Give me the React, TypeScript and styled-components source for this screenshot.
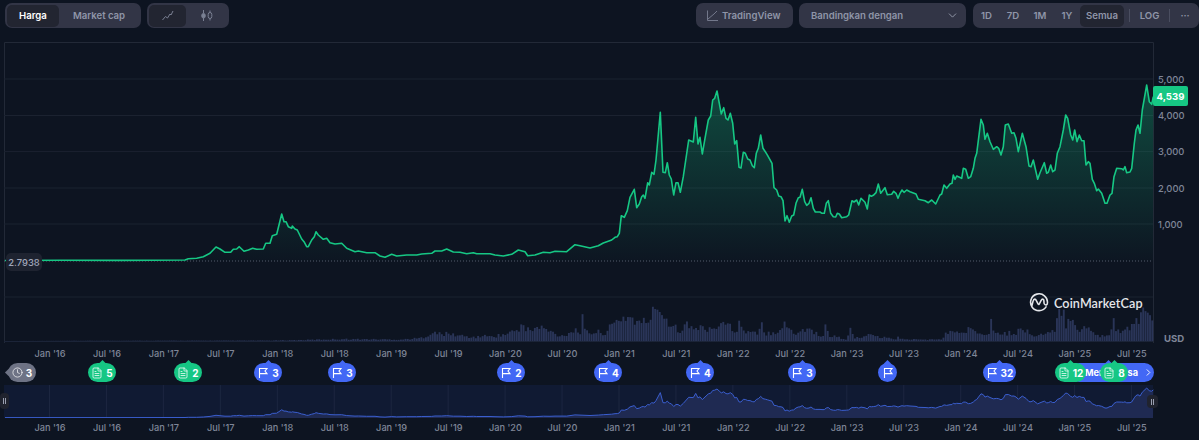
import React from 'react'
import styled, { createGlobalStyle } from 'styled-components'
import { ChevronDown, ChevronRight, Clock, FileText } from 'lucide-react'

const GREEN = '#16c784'
const BLUE = '#4368f5'
const MUTED = '#7f8698'
const BTN = '#323546'
const BTN_ACTIVE = '#222531'

type Pt = [number, number]

// traced from 3x crops, so every block has its own origin
const trace = (ox: number, oy: number, pts: number[][]): Pt[] =>
  pts.map(([x, y]) => [ox + x / 3, oy + y / 3] as Pt)

const PRICE: Pt[] = [
  [5, 260.5],
  [60, 260.2],
  [120, 260.4],
  ...trace(0, 190, [
    [555, 210], [565, 206], [590, 205], [610, 200], [630, 190], [648, 171], [660, 177], [675, 187], [692, 187],
    [700, 178], [710, 177], [718, 170], [732, 184], [745, 180], [758, 175], [770, 178], [790, 177], [797, 160],
    [810, 160], [817, 137], [830, 133], [845, 72], [852, 95], [858, 95], [865, 110], [875, 115], [877, 108],
    [885, 117], [892, 120], [905, 147], [912, 155], [920, 170], [925, 170], [935, 150], [943, 140], [948, 125],
    [955, 135],
  ]),
  ...trace(300, 200, [
    [70, 118], [80, 115], [90, 128], [105, 132], [125, 130], [140, 145], [165, 155], [175, 153], [200, 158],
    [225, 158], [240, 168], [255, 172], [275, 163], [290, 168], [320, 165], [350, 165], [365, 162], [395, 160],
    [405, 153], [425, 153], [440, 147], [460, 156], [480, 157], [500, 161], [520, 158], [530, 161], [570, 161],
    [585, 165], [610, 168], [635, 163], [655, 150], [675, 155], [683, 167], [705, 165], [730, 157], [750, 158],
    [765, 154], [800, 155], [825, 134],
  ]),
  ...trace(580, 80, [
    [0, 497], [30, 504], [55, 497], [70, 489], [95, 480], [105, 472], [112, 470], [118, 460], [124, 407], [133, 412],
    [142, 392], [150, 352], [163, 328], [170, 383], [178, 372], [185, 350], [190, 345], [195, 355], [203, 308],
    [208, 315], [215, 277], [222, 283], [228, 240], [241, 97], [249, 277], [256, 278], [262, 248], [268, 285],
    [274, 297], [281, 345], [288, 308], [294, 308], [301, 337], [310, 290], [326, 180], [340, 186], [347, 112],
    [354, 192], [360, 172], [367, 222], [375, 175], [385, 120], [392, 108], [398, 60], [404, 55], [411, 33],
    [418, 70], [424, 102], [431, 83], [438, 115], [444, 120], [451, 100], [458, 130], [464, 192], [470, 182],
    [477, 262], [483, 264], [490, 217], [496, 220], [503, 237], [510, 240], [517, 257], [523, 263], [529, 220],
    [535, 205], [542, 165], [549, 205], [556, 215], [563, 227], [576, 250], [582, 323], [590, 330], [596, 348],
    [603, 350], [609, 362], [615, 423], [621, 407], [628, 427], [635, 408], [641, 405], [648, 370], [655, 353],
    [660, 352], [667, 328], [674, 365], [680, 376], [687, 370], [693, 353], [700, 385], [706, 396], [720, 396],
    [726, 400], [733, 400], [739, 370], [745, 362], [752, 400], [760, 410], [767, 411], [772, 400], [778, 402],
    [785, 413], [800, 410], [806, 405], [816, 362], [822, 366], [830, 360], [836, 375], [843, 355], [855, 367],
    [862, 387], [868, 345], [874, 349], [880, 346], [888, 338], [895, 312], [902, 340], [915, 323], [922, 344],
    [935, 343], [941, 334], [948, 340], [954, 355],
  ]),
  ...trace(900, 80, [
    [0, 340], [6, 330], [12, 337], [20, 330], [30, 335], [48, 342], [55, 358], [75, 362], [85, 368], [95, 360],
    [107, 372], [120, 345], [125, 342], [132, 315], [140, 325], [150, 312], [156, 310], [160, 285], [165, 298],
    [170, 288], [185, 295], [190, 265], [197, 268], [205, 295], [212, 290], [220, 265], [225, 235], [230, 220],
    [243, 118], [250, 135], [255, 178], [262, 160], [270, 185], [280, 208], [290, 200], [296, 205], [303, 225],
    [310, 200], [316, 135], [325, 132], [335, 160], [342, 158], [348, 175], [355, 215], [367, 160], [378, 200],
    [387, 258], [393, 260], [400, 240], [413, 298], [420, 278], [433, 248], [440, 280], [445, 277], [452, 255],
    [458, 275], [465, 270], [472, 220], [480, 200], [490, 150], [497, 105], [503, 115], [512, 165], [518, 180],
    [524, 150], [531, 185], [538, 165], [545, 182], [552, 182], [558, 255], [565, 245], [570, 250], [577, 298],
    [583, 310], [590, 332], [595, 327], [605, 340], [615, 370], [621, 370], [630, 345], [636, 340], [642, 290],
    [650, 265], [665, 266], [670, 270], [675, 260], [680, 278], [690, 276], [695, 265], [703, 190], [708, 150],
    [714, 135], [720, 160], [727, 90], [740, 15], [748, 65], [755, 73], [760, 50],
  ]),
]

// x, bar height in px
const VOLUME: Pt[] = [
  [5, 0], [100, 0.3], [270, 0.5], [300, 1], [340, 2], [400, 1.5], [420, 3], [430, 8], [450, 7], [470, 4], [481, 4],
  [483, 10], [486, 4], [505, 7], [517, 12], [520, 18], [524, 11], [540, 14], [560, 5], [575, 12], [579, 8], [581, 24],
  [584, 9], [605, 9], [620, 25], [630, 25], [640, 17], [650, 25], [658, 40], [661, 30], [670, 18], [680, 12], [684, 14],
  [686, 27], [689, 12], [700, 14], [720, 14], [723, 32], [726, 15], [736, 12], [739, 22], [742, 10], [758, 7], [760, 19],
  [763, 8], [775, 10], [783, 17], [795, 8], [800, 12], [810, 12], [820, 5], [823, 6], [825, 17], [828, 6], [845, 2],
  [850, 12], [853, 3], [865, 4], [867, 12], [870, 5], [895, 2], [896, 8], [899, 2], [920, 1.5], [940, 1.5], [945, 8],
  [965, 10], [974, 14], [980, 9], [988, 9], [991, 24], [994, 8], [1010, 8], [1025, 13], [1030, 5], [1050, 8], [1054, 10],
  [1056, 22], [1061, 31], [1065, 20], [1072, 26], [1078, 12], [1090, 13], [1095, 5], [1110, 8], [1113, 25], [1116, 10],
  [1130, 12], [1135, 20], [1142, 38], [1148, 22], [1152, 28],
]

const volumeAt = (x: number) => {
  const i = VOLUME.findIndex(([vx]) => vx >= x)
  if (i <= 0) return 0
  const [x0, h0] = VOLUME[i - 1]
  const [x1, h1] = VOLUME[i]
  return h0 + ((h1 - h0) * (x - x0)) / (x1 - x0)
}

const BARS = Array.from({ length: 507 }, (_, i) => {
  const x = 5 + i * 2.27
  const noise = Math.abs(Math.sin(i * 12.9898) * 43758.5453) % 1
  return { x, h: volumeAt(x) * (0.62 + noise * 0.66) }
})

const toPath = (pts: Pt[]) => pts.map(([x, y], i) => `${i ? 'L' : 'M'}${x.toFixed(1)} ${y.toFixed(1)}`).join('')
const LINE = toPath(PRICE)
const NAV_PTS = PRICE.map(([x, y]) => [x, 417.6 + (y - 260.4) * 0.169] as Pt)
const NAV_LINE = toPath(NAV_PTS)

const MONTHS = [
  "Jan '16", "Jul '16", "Jan '17", "Jul '17", "Jan '18", "Jul '18", "Jan '19", "Jul '19", "Jan '20", "Jul '20",
  "Jan '21", "Jul '21", "Jan '22", "Jul '22", "Jan '23", "Jul '23", "Jan '24", "Jul '24", "Jan '25", "Jul '25",
]

const GlobalStyle = createGlobalStyle`
  html, body {
    margin: 0;
    background: #0d1421;
    overflow: hidden;
  }
  body {
    font-family: Inter, "Liberation Sans", sans-serif;
  }
`

const Page = styled.div`
  width: 1199px;
  height: 440px;
  display: flex;
  flex-direction: column;
  background: #0d1421;
`

const Toolbar = styled.div`
  display: flex;
  align-items: center;
  height: 25px;
  margin-top: 3px;
  padding-left: 5px;
`

const Group = styled.div<{ $gap?: number }>`
  display: flex;
  align-items: center;
  height: 25px;
  padding: 0 2px;
  border-radius: 7px;
  background: ${BTN};
  margin-left: ${p => p.$gap ?? 0}px;
`

const ToggleButton = styled.div<{ $w: number; $active?: boolean }>`
  display: flex;
  align-items: center;
  justify-content: center;
  flex: none;
  width: ${p => p.$w}px;
  height: 22px;
  border-radius: 5px;
  background: ${p => (p.$active ? BTN_ACTIVE : 'transparent')};
  color: ${p => (p.$active ? '#fff' : '#8f95a8')};
  font-size: 9.6px;
  font-weight: 600;
`

const Spacer = styled.div`
  flex: 1;
`

const TradingViewButton = styled.div`
  display: flex;
  align-items: center;
  gap: 3px;
  width: 97px;
  height: 25px;
  padding-left: 10px;
  box-sizing: border-box;
  border-radius: 7px;
  background: ${BTN};
  color: #8f95a8;
  font-size: 9.6px;
  font-weight: 600;
`

const CompareSelect = styled.div`
  display: flex;
  align-items: center;
  justify-content: space-between;
  width: 167px;
  height: 25px;
  margin-left: 6px;
  padding: 0 7px 0 12px;
  box-sizing: border-box;
  border-radius: 7px;
  background: ${BTN};
  color: #8f95a8;
  font-size: 9.6px;
  font-weight: 600;
`

const RangeGroup = styled(Group)`
  width: 226px;
  box-sizing: border-box;
  margin-left: 7px;
  padding: 0;
`

const RangeItem = styled.div<{ $w: number; $active?: boolean }>`
  display: flex;
  align-items: center;
  justify-content: center;
  flex: none;
  width: ${p => p.$w}px;
  height: 22px;
  border-radius: 5px;
  background: ${p => (p.$active ? BTN_ACTIVE : 'transparent')};
  color: #8f95a8;
  font-size: 9.6px;
  font-weight: 600;
`

const RangeDivider = styled.div`
  flex: none;
  width: 1px;
  height: 13px;
  background: #4a4e60;
`

const PlotRow = styled.div`
  display: flex;
  height: 301px;
  margin-top: 14px;
  padding-left: 4px;
  position: relative;
`

const Plot = styled.svg`
  display: block;
  flex: none;
  width: 1150px;
  height: 301px;
`

const PriceAxis = styled.div`
  display: flex;
  flex-direction: column;
  padding: 19px 0 0 4px;
  flex: 1;
`

const PriceLabel = styled.div`
  display: flex;
  align-items: center;
  height: 36.3px;
  color: ${MUTED};
  font-size: 9.4px;
  font-weight: 500;
`

const Currency = styled.div`
  margin: auto 0 0 6px;
  color: ${MUTED};
  font-size: 9.6px;
  font-weight: 700;
  position: relative;
  top: 1px;
`

const PriceBadge = styled.div`
  position: absolute;
  left: 1153px;
  top: 44px;
  display: flex;
  align-items: center;
  justify-content: center;
  width: 35px;
  height: 20px;
  border-radius: 2px;
  background: ${GREEN};
  color: #fff;
  font-size: 9.6px;
  font-weight: 700;
`

const StartTag = styled.div`
  position: absolute;
  left: 6px;
  top: 211px;
  display: flex;
  align-items: center;
  justify-content: center;
  width: 36px;
  height: 18px;
  border-radius: 5px;
  background: #1e2330;
  color: #a1a7bb;
  font-size: 9.4px;
  font-weight: 500;
`

const Brand = styled.div`
  position: absolute;
  left: 1029px;
  top: 251px;
  display: flex;
  align-items: center;
  gap: 5px;
  color: #e4e6ea;
  font-size: 12.6px;
  font-weight: 600;
  letter-spacing: 0.1px;
  font-family: Lato, Inter, sans-serif;
`

const TimeAxis = styled.div<{ $h: number }>`
  display: grid;
  grid-template-columns: repeat(20, 56.95px);
  align-items: center;
  height: ${p => p.$h}px;
  padding-left: 21.5px;
`

const TimeLabel = styled.div`
  text-align: center;
  color: ${MUTED};
  font-size: 9.2px;
  font-weight: 500;
  white-space: nowrap;
`

const EventRow = styled.div`
  position: relative;
  height: 19px;
`

const Pin = styled.div<{ $tone: 'grey' | 'green' | 'blue'; $nub?: 'top' | 'left' }>`
  position: absolute;
  top: 0;
  display: flex;
  align-items: center;
  justify-content: center;
  gap: 3px;
  height: 19px;
  box-sizing: border-box;
  border-radius: 10px;
  background: ${p => (p.$tone === 'grey' ? '#6e7385' : p.$tone === 'green' ? GREEN : BLUE)};
  color: #fff;
  font-size: 10px;
  font-weight: 700;

  &::before {
    content: '';
    position: absolute;
    background: inherit;
    width: 5px;
    height: 5px;
    transform: rotate(45deg);
    ${p => (p.$nub === 'left' ? 'left: -2.5px; top: 7px;' : 'left: calc(50% - 2.5px); top: -2px;')}
  }

  > * {
    position: relative;
  }
`

const NewsPill = styled(Pin)`
  justify-content: flex-start;
  gap: 0;
  padding-left: 15px;
  font-size: 9.2px;

  &::before {
    left: 36px;
  }
`

const PillGap = styled.span`
  width: 25px;
`

const PillChevron = styled(ChevronRight)`
  margin-left: 5px;
`

const Navigator = styled.div`
  position: relative;
  height: 33px;
  margin: 3px 0 0 4px;
  width: 1150px;
`

const NavChart = styled.svg`
  display: block;
  width: 1150px;
  height: 33px;
`

const NavHandle = styled.div<{ $side: 'left' | 'right' }>`
  position: absolute;
  top: ${p => (p.$side === 'left' ? 8 : 10)}px;
  ${p => (p.$side === 'left' ? 'left: -4px;' : 'left: 1143px;')}
  display: flex;
  align-items: center;
  justify-content: center;
  gap: 1px;
  width: ${p => (p.$side === 'left' ? 9 : 11)}px;
  height: ${p => (p.$side === 'left' ? 16 : 13)}px;
  border-radius: 4px;
  background: #20232e;

  &::before,
  &::after {
    content: '';
    width: 1px;
    height: 6px;
    background: #9a9fb0;
  }
`

const FlagIcon = () => (
  <svg width="12" height="12" viewBox="0 0 12 12" fill="none" stroke="#fff" strokeWidth="1.1">
    <path d="M2.5 11V1.5h7.5L8 4l2 2.6H2.5" />
  </svg>
)

const LineIcon = () => (
  <svg width="13" height="13" viewBox="0 0 13 13" fill="none" stroke="#7a8093" strokeWidth="1">
    <path d="M1.5 11l3-3.5 2 1.5 2.5-4 1 1 2-4" />
  </svg>
)

const CandleIcon = () => (
  <svg width="14" height="13" viewBox="0 0 14 13" fill="none" stroke="#7a8093" strokeWidth="1">
    <path d="M3.5 1v3M3.5 9v3" />
    <rect x="1.8" y="4.5" width="3.4" height="4.5" rx="1.7" fill="#7a8093" />
    <path d="M10 1.5v2M10 9.5v2" />
    <rect x="8.2" y="3.5" width="3.6" height="6" rx="1.8" />
  </svg>
)

const ChartIcon = () => (
  <svg width="13" height="13" viewBox="0 0 13 13" fill="none" stroke="#7a8093" strokeWidth="0.9">
    <path d="M1.5 1.5v10h10.5M2 10l6-5 3-3" />
  </svg>
)

const CmcLogo = () => (
  <svg width="20" height="20" viewBox="0 0 19 19" fill="none" stroke="#e4e6ea" strokeWidth="1.5" strokeLinecap="round" strokeLinejoin="round">
    <path d="M16.2 13.2A8 8 0 1 1 17.5 9.5c0 1.6-1.3 2.2-2.3 1.6-.9-.5-1-1.4-1-2.4V7.5c0-1-.5-1.7-1.2-1.7-.8 0-1.2.6-1.6 1.4l-1.5 3c-.3.6-.7 1-1.2.3L7 7.2C6.6 6.3 6.2 5.8 5.5 5.8c-.9 0-1.4 1-1.7 2.2l-1 4" />
  </svg>
)

interface IEvent {
  left: number
  tone: 'grey' | 'green' | 'blue'
  width: number
  count?: string
}

const EVENTS: IEvent[] = [
  { left: 88, width: 28, tone: 'green', count: '5' },
  { left: 174, width: 28, tone: 'green', count: '2' },
  { left: 254, width: 28, tone: 'blue', count: '3' },
  { left: 328, width: 28, tone: 'blue', count: '3' },
  { left: 497, width: 28, tone: 'blue', count: '2' },
  { left: 594, width: 28, tone: 'blue', count: '4' },
  { left: 686, width: 28, tone: 'blue', count: '4' },
  { left: 788, width: 28, tone: 'blue', count: '3' },
  { left: 878, width: 19, tone: 'blue' },
  { left: 983, width: 33, tone: 'blue', count: '32' },
  { left: 1055, width: 31, tone: 'green', count: '12' },
  { left: 1100, width: 28, tone: 'green', count: '8' },
]

export default function App() {
  return (
    <Page>
      <GlobalStyle />
      <Toolbar>
        <Group>
          <ToggleButton $w={52} $active>Harga</ToggleButton>
          <ToggleButton $w={80}>Market cap</ToggleButton>
        </Group>
        <Group $gap={6}>
          <ToggleButton $w={37} $active><LineIcon /></ToggleButton>
          <ToggleButton $w={41}><CandleIcon /></ToggleButton>
        </Group>
        <Spacer />
        <TradingViewButton><ChartIcon />TradingView</TradingViewButton>
        <CompareSelect>
          Bandingkan dengan
          <ChevronDown size={13} color="#9ea3b4" strokeWidth={1.6} />
        </CompareSelect>
        <RangeGroup>
          <RangeItem $w={27}>1D</RangeItem>
          <RangeItem $w={26}>7D</RangeItem>
          <RangeItem $w={28}>1M</RangeItem>
          <RangeItem $w={26}>1Y</RangeItem>
          <RangeItem $w={44} $active>Semua</RangeItem>
          <RangeItem $w={5} />
          <RangeDivider />
          <RangeItem $w={39}>LOG</RangeItem>
          <RangeDivider />
          <RangeItem $w={30}>···</RangeItem>
        </RangeGroup>
      </Toolbar>

      <PlotRow>
        <Plot viewBox="4 42 1150 301">
          <defs>
            <linearGradient id="area" gradientUnits="userSpaceOnUse" x1="0" y1="85" x2="0" y2="261">
              <stop offset="0" stopColor={GREEN} stopOpacity="0.31" />
              <stop offset="1" stopColor={GREEN} stopOpacity="0.01" />
            </linearGradient>
          </defs>
          <path d="M4.5 343V42.5H1153.5V343" fill="none" stroke="#222937" />
          {[79, 115.5, 151.6, 188, 224, 297].map(y => (
            <line key={y} x1="4" x2="1153" y1={y} y2={y} stroke="#1b2230" />
          ))}
          <line x1="4" x2="1153" y1="261" y2="261" stroke="#555b6c" strokeDasharray="1 2" />
          <path d={`${LINE}L1153 261L5 261Z`} fill="url(#area)" />
          <path d={LINE} fill="none" stroke={GREEN} strokeWidth="1.6" strokeLinejoin="round" />
          {BARS.map(b => (
            <rect key={b.x} x={b.x} y={341 - b.h} width="1.9" height={b.h} fill="#2a3558" />
          ))}
          <line x1="4" x2="1153" y1="341.5" y2="341.5" stroke="#1b2438" />
        </Plot>
        <PriceAxis>
          {['5,000', '4,000', '3,000', '2,000', '1,000'].map(p => (
            <PriceLabel key={p}>{p}</PriceLabel>
          ))}
          <Currency>USD</Currency>
        </PriceAxis>
        <PriceBadge>4,539</PriceBadge>
        <StartTag>2.7938</StartTag>
        <Brand><CmcLogo />CoinMarketCap</Brand>
      </PlotRow>

      <TimeAxis $h={20}>
        {MONTHS.map(m => <TimeLabel key={m}>{m}</TimeLabel>)}
      </TimeAxis>

      <EventRow>
        <Pin $tone="grey" $nub="left" style={{ left: 8, width: 28 }}>
          <Clock size={11} strokeWidth={1.5} />
          <span>3</span>
        </Pin>
        <NewsPill $tone="blue" style={{ left: 1070, width: 84 }}>
          <span>Mer</span>
          <PillGap />
          <span>sa</span>
          <PillChevron size={11} strokeWidth={2} />
        </NewsPill>
        {EVENTS.map(e => (
          <Pin key={e.left} $tone={e.tone} style={{ left: e.left, width: e.width }}>
            {e.tone === 'green' ? <FileText size={12} strokeWidth={1.5} /> : <FlagIcon />}
            {e.count && <span>{e.count}</span>}
          </Pin>
        ))}
      </EventRow>

      <Navigator>
        <NavChart viewBox="4 385 1150 33">
          <rect x="4" y="385" width="1149" height="33" fill="#101a33" />
          {MONTHS.map((m, i) => (
            <line key={m} x1={49.5 + i * 56.95} x2={49.5 + i * 56.95} y1="385" y2="418" stroke="#1c2640" />
          ))}
          <path d={`${NAV_LINE}L1153 418L5 418Z`} fill="#1f2a52" />
          <path d={NAV_LINE} fill="none" stroke="#3a5ecf" strokeWidth="1" />
        </NavChart>
        <NavHandle $side="left" />
        <NavHandle $side="right" />
      </Navigator>

      <TimeAxis $h={18}>
        {MONTHS.map(m => <TimeLabel key={m}>{m}</TimeLabel>)}
      </TimeAxis>
    </Page>
  )
}
